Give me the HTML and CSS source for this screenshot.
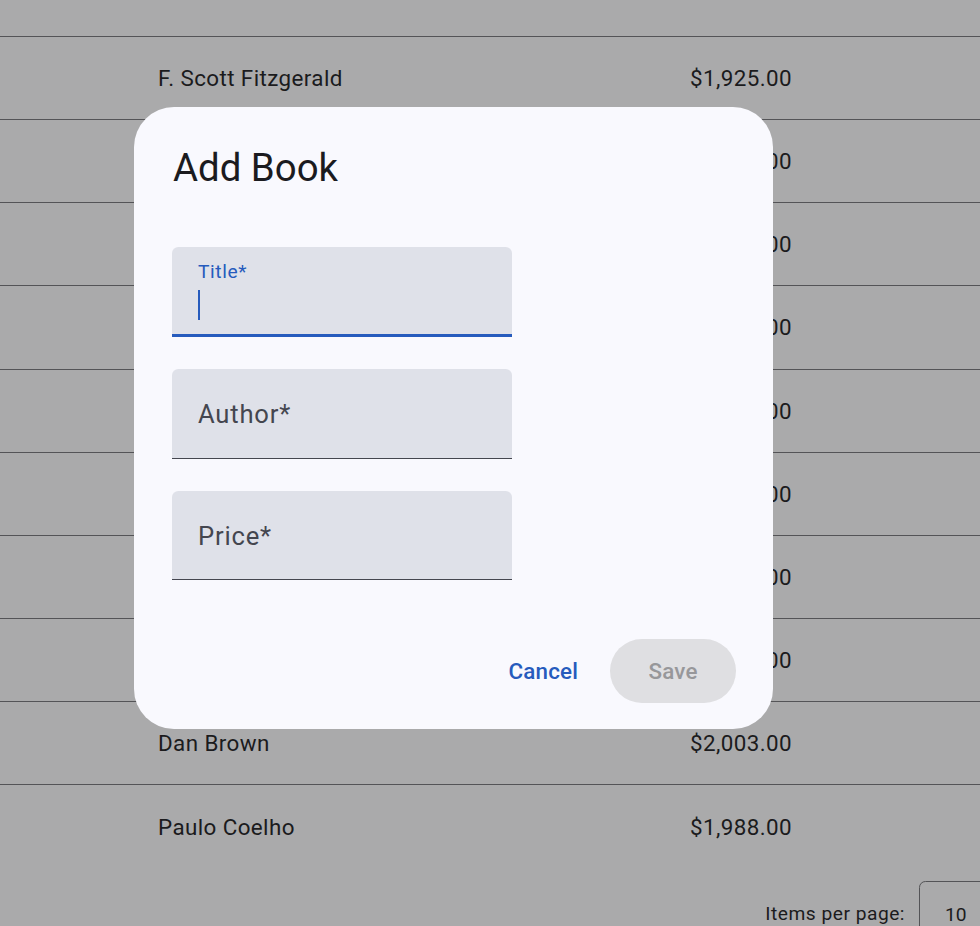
FILE: index.html
```html
<!DOCTYPE html>
<html lang="en">
<head>
<meta charset="utf-8">
<title>Books</title>
<link rel="stylesheet" href="styles.css">
</head>
<body>
<div class="table">
  <div class="row row-partial"></div>
  <div class="row"><span class="name">F. Scott Fitzgerald</span><span class="price">$1,925.00</span></div>
  <div class="row"><span class="name">George Orwell</span><span class="price">$1,949.00</span></div>
  <div class="row"><span class="name">Harper Lee</span><span class="price">$1,960.00</span></div>
  <div class="row"><span class="name">J. D. Salinger</span><span class="price">$1,951.00</span></div>
  <div class="row"><span class="name">Jane Austen</span><span class="price">$1,813.00</span></div>
  <div class="row"><span class="name">J. R. R. Tolkien</span><span class="price">$1,937.00</span></div>
  <div class="row"><span class="name">Aldous Huxley</span><span class="price">$1,932.00</span></div>
  <div class="row"><span class="name">J. K. Rowling</span><span class="price">$1,997.00</span></div>
  <div class="row"><span class="name">Dan Brown</span><span class="price">$2,003.00</span></div>
  <div class="row row-last"><span class="name">Paulo Coelho</span><span class="price">$1,988.00</span></div>
</div>
<div class="paginator">
  <span class="pag-label">Items per page:</span>
  <div class="pag-select"><span>10</span></div>
</div>

<div class="dialog" role="dialog" aria-label="Add Book">
  <h2 class="dialog-title">Add Book</h2>
  <div class="fields">
    <div class="field field-focused">
      <span class="field-label-float">Title*</span>
      <span class="caret"></span>
    </div>
    <div class="field">
      <span class="field-label">Author*</span>
    </div>
    <div class="field">
      <span class="field-label">Price*</span>
    </div>
  </div>
  <div class="actions">
    <button class="btn btn-text">Cancel</button>
    <button class="btn btn-filled" disabled>Save</button>
  </div>
</div>
</body>
</html>
```

FILE: styles.css
```css
* { box-sizing: border-box; }

html, body {
  margin: 0;
  padding: 0;
}

body {
  background: #aaaaab;
  font-family: Roboto, "Liberation Sans", sans-serif;
  color: #1b1b1d;
  width: 980px;
  height: 926px;
  overflow: hidden;
}

.table {
  display: flex;
  flex-direction: column;
}

.row {
  height: 83.15px;
  border-bottom: 1px solid #545457;
  display: flex;
  align-items: center;
  justify-content: space-between;
  padding: 0 188px 0 158px;
  font-size: 22.4px;
  letter-spacing: 0.4px;
}

.row-partial {
  height: 37px;
}

.row-last {
  border-bottom: none;
  padding-top: 1px;
}

.paginator {
  display: flex;
  justify-content: flex-end;
  align-items: flex-start;
  height: 60px;
}

.pag-label {
  font-size: 19.2px;
  line-height: 22px;
  margin-top: 35px;
  letter-spacing: 0.5px;
  color: #1b1b1d;
}

.pag-select {
  margin-top: 12.5px;
  margin-left: 14px;
  width: 80px;
  height: 70px;
  border: 1px solid #545457;
  border-radius: 6.4px;
  padding: 22.5px 0 0 25px;
  font-size: 19.2px;
  line-height: 22px;
  margin-right: -19px;
}

.dialog {
  position: fixed;
  left: 134px;
  top: 107px;
  width: 639px;
  height: 622px;
  background: #f9f9fe;
  border-radius: 40px;
  display: flex;
  flex-direction: column;
  padding: 35px 37px 26px 38px;
}

.dialog-title {
  margin: 0;
  font-size: 38.4px;
  line-height: 51.2px;
  font-weight: 400;
  color: #1b1b1f;
  padding-left: 1px;
}

.fields {
  display: flex;
  flex-direction: column;
  gap: 32px;
  margin-top: 54px;
}

.field {
  position: relative;
  width: 340px;
  height: 90px;
  background: #dfe1e9;
  border-radius: 6.4px 6.4px 0 0;
  border-bottom: 1px solid #44464f;
  padding-left: 26px;
}

.field:last-child {
  height: 89px;
}

.field-focused {
  border-bottom: 3px solid #265bbd;
}

.field-label {
  display: block;
  font-size: 25.6px;
  line-height: 30px;
  letter-spacing: 0.8px;
  color: #44464f;
  padding-top: 30px;
}

.field-label-float {
  display: block;
  font-size: 19.2px;
  line-height: 22px;
  letter-spacing: 0.6px;
  color: #265bbd;
  padding-top: 13.5px;
}

.caret {
  display: block;
  width: 2px;
  height: 30px;
  background: #265bbd;
  margin-top: 7px;
}

.actions {
  margin-top: auto;
  display: flex;
  justify-content: flex-end;
  align-items: center;
  gap: 13px;
}

.btn {
  font-family: Roboto, "Liberation Sans", sans-serif;
  font-size: 22.4px;
  font-weight: 500;
  letter-spacing: 0.16px;
  height: 64px;
  border: none;
  border-radius: 32px;
  background: transparent;
  cursor: pointer;
}

.btn-text {
  color: #265bbd;
  padding: 0 19px;
}

.btn-filled {
  background: #dfdfe2;
  color: #97979a;
  padding: 0 38px;
  width: 126px;
}
```
